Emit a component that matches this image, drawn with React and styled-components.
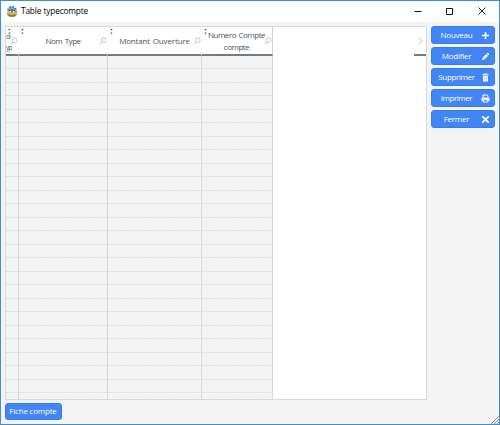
import React from "react";
import styled, { createGlobalStyle } from "styled-components";

const Global = createGlobalStyle`
  * { box-sizing: border-box; }
  body { margin: 0; overflow: hidden; }
  button { font: inherit; }
`;

const Window = styled.div`
  width: 500px;
  height: 425px;
  display: flex;
  flex-direction: column;
  border: 1px solid #3f8fd2;
  background: #f4f4f4;
  font-family: "Open Sans", "Noto Sans", sans-serif;
  position: relative;
`;

const TitleBar = styled.header`
  flex: 0 0 21px;
  display: flex;
  align-items: center;
  padding-left: 5px;
  background: #fff;
`;

const Title = styled.h1`
  margin: 0 0 1px 3px;
  flex: 1;
  font-size: 8.3px;
  line-height: 20px;
  font-weight: 500;
  letter-spacing: -0.18px;
  word-spacing: 0.5px;
  color: #000;
  white-space: nowrap;
`;

const WindowControl = styled.button`
  width: 32px;
  height: 20px;
  padding: 0 3px 2px 0;
  border: 0;
  background: none;
  display: flex;
  align-items: center;
  justify-content: center;
`;

const Body = styled.main`
  display: flex;
  gap: 4px;
  padding: 4px 4px 0;
`;

const Table = styled.section`
  width: 422px;
  height: 374px;
  border: 1px solid #d8d8d8;
  background: #fff;
  display: flex;
  flex-direction: column;
`;

const HeaderRow = styled.div`
  flex: 0 0 29px;
  display: flex;
`;

const HeaderCell = styled.div`
  position: relative;
  width: ${(p) => p.$width}px;
  height: 29px;
  border-right: 1px solid ${(p) => (p.$last ? "#d0d0d0" : "#fff")};
  border-bottom: 2px solid #727b82;
  display: flex;
  align-items: center;
  justify-content: center;
  padding: 1px ${(p) => (p.$last ? 1 : 0)}px 0 0;
  color: #4c545d;
  font-size: 8px;
  line-height: 12px;
  text-align: center;
  white-space: pre;
  letter-spacing: ${(p) => p.$spacing || 0}px;
  word-spacing: 0.8px;
`;

const NarrowLabel = styled.span`
  position: absolute;
  left: 0;
  top: 4px;
  font-size: 6.5px;
  line-height: 11px;
  letter-spacing: -1px;
  text-align: left;
`;

const SortDots = styled.svg`
  position: absolute;
  left: 2px;
  top: 1px;
`;

const SearchMark = styled.svg`
  position: absolute;
  right: 0;
  top: 10px;
`;

const HeaderEnd = styled.div`
  margin-left: auto;
  width: 12px;
  border-bottom: 2px solid #727b82;
  display: flex;
  align-items: center;
  justify-content: center;
  padding-top: 1px;
`;

const Rows = styled.div`
  flex: 1;
  display: flex;
  width: 267px;
`;

const RowColumn = styled.div`
  width: ${(p) => p.$width}px;
  border-right: 1px solid #d8d8d8;
  background:
    repeating-linear-gradient(to right, transparent 0 2px, rgba(244, 244, 244, 0.75) 2px 3px),
    repeating-linear-gradient(to bottom, transparent 0 12.5px, #e0e0e0 12.5px 13.48px),
    #f4f4f4;
`;

const Actions = styled.nav`
  display: flex;
  flex-direction: column;
  gap: 3px;
`;

const ActionButton = styled.button`
  width: 64px;
  height: 18px;
  padding: 0 4px 0 1px;
  border: 1px solid #3a7bea;
  border-radius: 3px;
  background: #4285f4;
  color: #fff;
  font-size: 8px;
  line-height: 14px;
  letter-spacing: ${(p) => p.$spacing || 0}px;
  display: flex;
  align-items: center;
  svg { flex: none; }
`;

const ActionLabel = styled.span`
  flex: 1;
  text-align: center;
  white-space: nowrap;
  padding: 0 1px 0 0;
`;

const Footer = styled.footer`
  padding: 3px 4px;
`;

const FooterButton = styled(ActionButton)`
  width: 57px;
  height: 17px;
  padding: 0 0 1px;
`;

const Grip = styled.svg`
  position: absolute;
  right: 0;
  bottom: 0;
`;

const columns = [
  { label: "", width: 13 },
  { label: "Nom Type", width: 89, spacing: -0.46 },
  { label: "Montant Ouverture", width: 94, spacing: -0.15 },
  { label: "Numero Compte\ncompte", width: 71, spacing: -0.48 },
];

const Plus = () => (
  <svg width="9" height="9" viewBox="0 0 9 9">
    <path d="M4.5 1v7M1 4.5h7" stroke="#fff" strokeWidth="1.5" />
  </svg>
);

const Pencil = () => (
  <svg width="9" height="9" viewBox="0 0 9 9">
    <path d="M1 8l.5-2.3L5.3 1.9 7.1 3.7 3.3 7.5z M5.7 1.5l.6-.6q.4-.3.8 0l1 1q.3.4 0 .8l-.6.6z" fill="#fff" />
  </svg>
);

const Trash = () => (
  <svg width="9" height="9" viewBox="0 0 9 9">
    <path d="M1.5 1.7h6M3.5 1h2" stroke="#fff" strokeWidth="1" />
    <path d="M2 2.7h5V8q0 .5-.5.5h-4Q2 8.5 2 8z" fill="#fff" />
    <path d="M3.7 3.7v3.8M5.3 3.7v3.8" stroke="#4285f4" strokeWidth=".4" />
  </svg>
);

const Printer = () => (
  <svg width="9" height="9" viewBox="0 0 9 9">
    <path d="M2 3.5V1h4.2l.8.8v1.7" fill="none" stroke="#fff" />
    <path d="M1.5 3.5h6q1 0 1 1V7H7V5.5H2V7H.5V4.5q0-1 1-1z" fill="#fff" />
    <path d="M2.3 5.8h4.4V8H2.3z" fill="none" stroke="#fff" strokeWidth=".9" />
  </svg>
);

const Cross = () => (
  <svg width="9" height="9" viewBox="0 0 9 9">
    <path d="M1.3 1.3l6.4 6.4M7.7 1.3L1.3 7.7" stroke="#fff" strokeWidth="1.7" />
  </svg>
);

const actions = [
  { label: "Nouveau", Icon: Plus, spacing: -0.25 },
  { label: "Modifier", Icon: Pencil, spacing: -0.25 },
  { label: "Supprimer", Icon: Trash, spacing: -0.35 },
  { label: "Imprimer", Icon: Printer, spacing: -0.45 },
  { label: "Fermer", Icon: Cross, spacing: -0.25 },
];

const AppIcon = () => (
  <svg width="12" height="12" viewBox="0 0 12 12">
    <circle cx="6" cy="4.6" r="3.3" fill="#3f70a2" />
    <circle cx="6" cy="4.6" r="4" fill="none" stroke="#3f70a2" strokeWidth="1.7" strokeDasharray="1.8 1.3" />
    <path d="M3.5 3.2Q6 1.8 8.5 3.2" stroke="#9cc4e4" fill="none" />
    <path d="M.6 6.2l2.6-.9L6 6.6l2.8-1.3 2.6.9-.7 3L8.5 11l-2.5-.8L3.5 11 1.3 9.2z" fill="#e3b136" />
    <path d="M2.5 8.7Q6 11.5 9.5 8.7" stroke="#3f6c95" strokeWidth="1.3" fill="none" />
    <circle cx="4.4" cy="5.6" r=".9" fill="#fff" />
    <circle cx="7.6" cy="5.6" r=".9" fill="#fff" />
  </svg>
);

export default function App() {
  return (
    <>
      <Global />
      <Window>
        <TitleBar>
          <AppIcon />
          <Title>Table typecompte</Title>
          <WindowControl aria-label="Minimize">
            <svg width="8" height="8" viewBox="0 0 8 8"><path d="M.5 4.5h7" stroke="#111" /></svg>
          </WindowControl>
          <WindowControl aria-label="Maximize">
            <svg width="8" height="8" viewBox="0 0 8 8"><path d="M.5 1.5h6v6h-6z" stroke="#111" fill="none" /></svg>
          </WindowControl>
          <WindowControl aria-label="Close">
            <svg width="8" height="8" viewBox="0 0 8 8"><path d="M.5.5l7 7M7.5.5l-7 7" stroke="#111" strokeWidth=".9" /></svg>
          </WindowControl>
        </TitleBar>
        <Body>
          <Table>
            <HeaderRow>
              {columns.map((c, i) => (
                <HeaderCell key={i} $width={c.width} $spacing={c.spacing} $last={i === columns.length - 1}>
                  {c.label || <NarrowLabel>{"oi\nyp"}</NarrowLabel>}
                  <SortDots width="3" height="7" viewBox="0 0 3 7">
                    <path d="M.7 1h1.5v1.2H.7zM.7 4.5h1.5v1.2H.7z" fill="#444" />
                  </SortDots>
                  <SearchMark width="8" height="8" viewBox="0 0 8 8">
                    <circle cx="4.8" cy="3.2" r="2.4" fill="none" stroke="#bcbcbc" strokeWidth=".8" />
                    <path d="M3 5L.8 7.2" stroke="#bcbcbc" strokeWidth="1" />
                  </SearchMark>
                </HeaderCell>
              ))}
              <HeaderEnd>
                <svg width="5" height="8" viewBox="0 0 5 8"><path d="M.7.8L4 4 .7 7.2" fill="none" stroke="#c4c4c4" /></svg>
              </HeaderEnd>
            </HeaderRow>
            <Rows>
              {columns.map((c, i) => <RowColumn key={i} $width={c.width} />)}
            </Rows>
          </Table>
          <Actions>
            {actions.map(({ label, Icon, spacing }) => (
              <ActionButton key={label} $spacing={spacing}>
                <ActionLabel>{label}</ActionLabel>
                <Icon />
              </ActionButton>
            ))}
          </Actions>
        </Body>
        <Footer>
          <FooterButton $spacing={-0.2}>
            <ActionLabel>Fiche compte</ActionLabel>
          </FooterButton>
        </Footer>
        <Grip width="8" height="8" viewBox="0 0 8 8">
          <path d="M0 8L8 0M3 8L8 3M6 8L8 6" stroke="#8c8c8c" strokeWidth="1" />
        </Grip>
      </Window>
    </>
  );
}
